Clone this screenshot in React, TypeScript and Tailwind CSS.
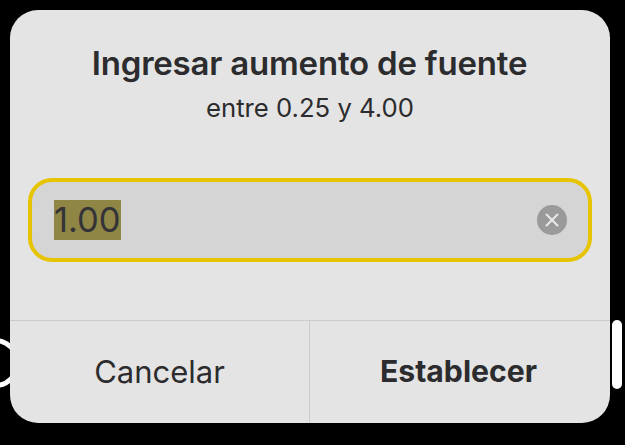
import { X } from 'lucide-react'

export default function App() {
  return (
    <div className="relative h-[445px] w-[625px] overflow-hidden bg-black pl-[10px] pt-[10px] font-['Inter',sans-serif] text-[#2c2c2e]">
      {/* bits of the page behind the dialog */}
      <div className="absolute left-[-30px] top-[338px] h-[50px] w-[50px] rounded-full border-[5px] border-white" />
      <div className="absolute left-[612px] top-[320px] h-[69px] w-[10px] rounded-full bg-white" />

      <div className="relative flex h-[413px] w-[600px] flex-col rounded-[28px] bg-[#e4e4e4]">
        <div className="flex flex-col items-center pt-[31px]">
          <p className="pr-[1px] text-[33px] font-semibold leading-[44px] tracking-[-0.2px]">Ingresar aumento de fuente</p>
          <p className="mt-[6px] text-[25.7px] leading-[34px]">entre 0.25 y 4.00</p>
        </div>

        <div className="mx-[18px] mt-[53px] flex h-[84px] items-center justify-between rounded-[24px] border-[4px] border-[#e6c402] bg-[#d5d5d5] pl-[22px] pr-[21px]">
          <span className="bg-[#8f8545] text-[34.5px] leading-[40px] text-[#333338]">1.00</span>
          <span className="flex h-[30px] w-[30px] items-center justify-center rounded-full bg-[#9a9a9a]">
            <X className="size-[22px] text-[#e8e8e8]" strokeWidth={2.25} />
          </span>
        </div>

        <div className="mt-[58px] flex flex-1 border-t border-[#cccccc]">
          <div className="flex w-[300px] items-center justify-center border-r border-[#cccccc] text-[31px]">Cancelar</div>
          <div className="flex flex-1 items-center justify-center pr-[3px] text-[30.2px] font-bold">Establecer</div>
        </div>
      </div>
    </div>
  )
}
